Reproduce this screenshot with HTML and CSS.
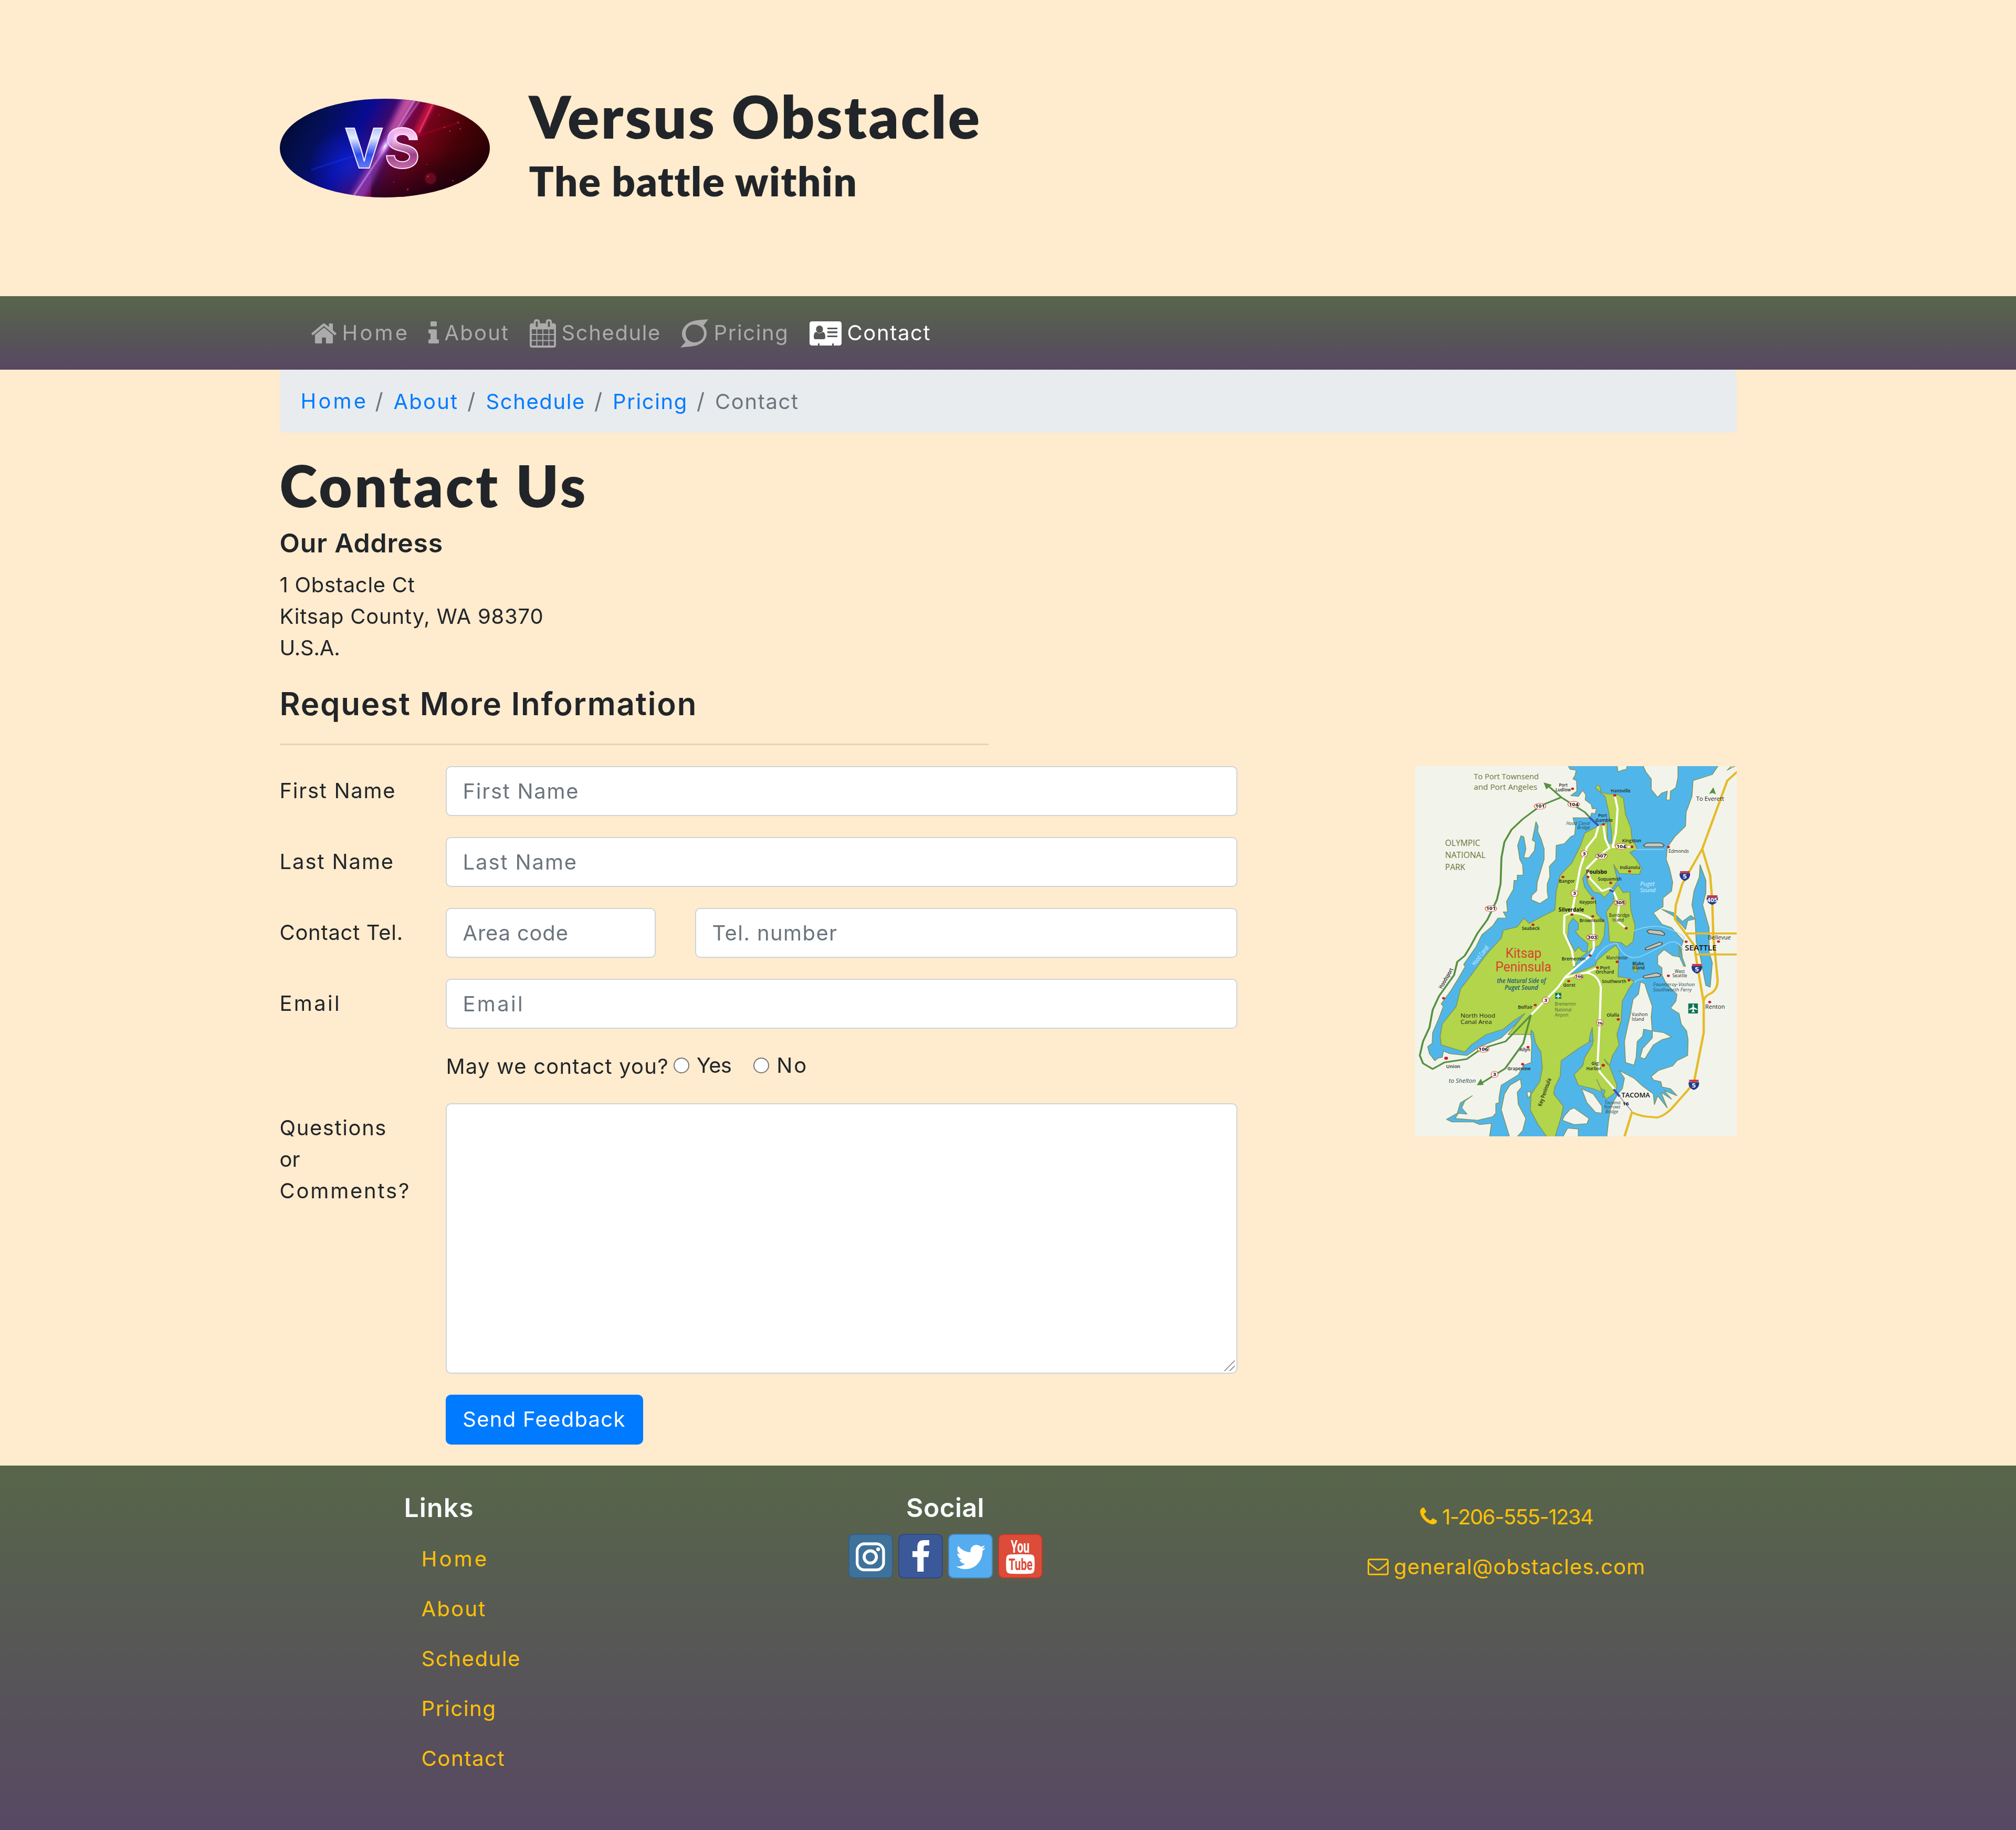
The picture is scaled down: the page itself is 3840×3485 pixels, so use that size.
FILE: index.html
```html
<!DOCTYPE html>
<html lang="en">
<head>
<meta charset="utf-8">
<title>Versus Obstacle - Contact</title>
<link rel="stylesheet" href="styles.css">
</head>
<body>
<header class="jumbotron">
  <div class="container masthead">
    <svg class="logo" viewBox="39 24 1200 564" preserveAspectRatio="none">
      <defs>
        <linearGradient id="lg" x1="0" y1=".2" x2="1" y2=".45">
          <stop offset="0" stop-color="#020a30"/><stop offset=".2" stop-color="#04125e"/><stop offset=".38" stop-color="#0a0ca0"/><stop offset=".48" stop-color="#3c0a78"/><stop offset=".58" stop-color="#7c0850"/><stop offset=".7" stop-color="#7a0418"/><stop offset=".85" stop-color="#4c0308"/><stop offset="1" stop-color="#300205"/>
        </linearGradient>
        <linearGradient id="lv" x1="0" y1="0" x2="0" y2="1"><stop offset="0" stop-color="#6a86f0"/><stop offset=".35" stop-color="#e4ecff"/><stop offset=".6" stop-color="#2b4cec"/><stop offset="1" stop-color="#a5a8f8"/></linearGradient>
        <linearGradient id="ls" x1="0" y1="0" x2="0" y2="1"><stop offset="0" stop-color="#e070d0"/><stop offset=".35" stop-color="#ffd0f4"/><stop offset=".6" stop-color="#a04088"/><stop offset="1" stop-color="#f090c8"/></linearGradient>
        <linearGradient id="dk" x1="0" y1="0" x2="0" y2="1"><stop offset=".5" stop-color="#08001c" stop-opacity="0"/><stop offset="1" stop-color="#08001c" stop-opacity=".6"/></linearGradient>
        <radialGradient id="gw"><stop offset="0" stop-color="#fff"/><stop offset=".3" stop-color="#e8b8ff" stop-opacity=".7"/><stop offset="1" stop-color="#8a40ff" stop-opacity="0"/></radialGradient>
        <radialGradient id="gb"><stop offset="0" stop-color="#1030ff" stop-opacity=".6"/><stop offset="1" stop-color="#1030ff" stop-opacity="0"/></radialGradient>
        <pattern id="dots" width="10" height="10" patternUnits="userSpaceOnUse"><circle cx="3" cy="3" r="2" fill="#000" opacity=".35"/><circle cx="8" cy="8" r="2" fill="#000" opacity=".35"/></pattern>
        <clipPath id="ell"><ellipse cx="639" cy="306" rx="600" ry="282"/></clipPath>
        <filter id="soft" x="-50%" y="-50%" width="200%" height="200%"><feGaussianBlur stdDeviation="12"/></filter>
        <filter id="thin" x="-50%" y="-50%" width="200%" height="200%"><feGaussianBlur stdDeviation="3"/></filter>
      </defs>
      <g clip-path="url(#ell)">
        <rect x="39" y="24" width="1200" height="564" fill="url(#lg)"/>
        <ellipse cx="440" cy="400" rx="230" ry="220" fill="url(#gb)"/>
        <rect x="560" y="24" width="679" height="564" fill="url(#dk)"/>
        <g filter="url(#soft)">
          <path d="M740 10L840 10 650 330 520 600 430 600 600 300Z" fill="#b050d0" opacity=".6"/>
          <path d="M900 10L950 10 830 240 780 260Z" fill="#f01850" opacity=".7"/>
          <path d="M760 10L820 10 700 210 660 220Z" fill="#ff70b0" opacity=".6"/>
        </g>
        <rect x="39" y="24" width="1200" height="564" fill="url(#dots)"/>
        <g filter="url(#thin)" stroke-linecap="round" fill="none">
          <path d="M810 30L640 310 460 580" stroke="#f0b0ff" stroke-width="6" opacity=".8"/>
          <path d="M835 40L700 230" stroke="#ff90d0" stroke-width="4"/>
          <path d="M915 50L835 215" stroke="#ff4070" stroke-width="8"/>
          <path d="M220 430L480 345" stroke="#1440ff" stroke-width="6" opacity=".6"/>
          <path d="M830 235L1060 160" stroke="#d01040" stroke-width="4" opacity=".7"/>
          <circle cx="900" cy="480" r="34" fill="#c01030" opacity=".35"/>
        </g>
        <g fill="#ff3050" opacity=".7"><circle cx="1058" cy="160" r="5"/><circle cx="980" cy="188" r="4"/><circle cx="1010" cy="208" r="4"/><circle cx="1070" cy="196" r="4"/><circle cx="770" cy="542" r="5"/><circle cx="690" cy="500" r="3"/><circle cx="880" cy="400" r="3"/><circle cx="1028" cy="492" r="4"/><circle cx="950" cy="116" r="3"/><circle cx="885" cy="468" r="5"/></g>
        <g font-family="Inter, sans-serif" font-weight="700" font-size="312" stroke="#f4eeff" stroke-width="6">
          <text x="408" y="419" textLength="224" lengthAdjust="spacingAndGlyphs" fill="url(#lv)">V</text>
          <text x="636" y="419" textLength="204" lengthAdjust="spacingAndGlyphs" fill="url(#ls)">S</text>
        </g>
        <ellipse cx="640" cy="295" rx="34" ry="100" transform="rotate(30 640 295)" fill="url(#gw)"/>
      </g>
    </svg>
    <div class="brand">
      <h1 class="brand-name">Versus Obstacle</h1>
      <h2 class="brand-tag">The battle within</h2>
    </div>
  </div>
</header>

<nav class="navbar">
  <div class="container nav-items">
    <a class="nav-link"><svg width="48" height="38" viewBox="89 253 1614 1283"><path fill="currentColor" d="M1472 992v480q0 26-19 45t-45 19h-384v-384h-256v384h-384q-26 0-45-19t-19-45v-480q0-1 .5-3t.5-3l575-474 575 474q1 2 1 6zm223-69l-62 74q-8 9-21 11h-3q-13 0-21-7l-692-577-692 577q-12 8-24 7-13-2-21-11l-62-74q-8-10-7-23.5t11-21.5l719-599q32-26 76-26t76 26l244 204v-195q0-14 9-23t23-9h192q14 0 23 9t9 23v408l219 182q10 8 11 21.5t-7 23.5z"/></svg><span class="w-home">Home</span></a>
    <a class="nav-link"><svg class="raised" width="20" height="42" viewBox="576 128 640 1408" preserveAspectRatio="none"><path fill="currentColor" d="M1216 1344v128q0 26-19 45t-45 19h-512q-26 0-45-19t-19-45v-128q0-26 19-45t45-19h64v-384h-64q-26 0-45-19t-19-45v-128q0-26 19-45t45-19h384q26 0 45 19t19 45v576h64q26 0 45 19t19 45zm-128-1152v192q0 26-19 45t-45 19h-256q-26 0-45-19t-19-45v-192q0-26 19-45t45-19h256q26 0 45 19t19 45z"/></svg><span class="w-about">About</span></a>
    <a class="nav-link"><svg width="50" height="54" viewBox="64 0 1664 1792"><path fill="currentColor" d="M192 1664h288v-288h-288v288zm352 0h320v-288h-320v288zm-352-352h288v-320h-288v320zm352 0h320v-320h-320v320zm-352-384h288v-288h-288v288zm736 736h320v-288h-320v288zm-384-736h320v-288h-320v288zm768 736h288v-288h-288v288zm-384-352h320v-320h-320v320zm-352-864v-288q0-13-9.5-22.5t-22.5-9.5h-64q-13 0-22.5 9.5t-9.5 22.5v288q0 13 9.5 22.5t22.5 9.5h64q13 0 22.5-9.5t9.5-22.5zm736 864h288v-320h-288v320zm-384-384h320v-288h-320v288zm384 0h288v-288h-288v288zm32-480v-288q0-13-9.5-22.5t-22.5-9.5h-64q-13 0-22.5 9.5t-9.5 22.5v288q0 13 9.5 22.5t22.5 9.5h64q13 0 22.5-9.5t9.5-22.5zm384-64v1280q0 52-38 90t-90 38h-1408q-52 0-90-38t-38-90v-1280q0-52 38-90t90-38h128v-96q0-66 47-113t113-47h64q66 0 113 47t47 113v96h384v-96q0-66 47-113t113-47h64q66 0 113 47t47 113v96h128q52 0 90 38t38 90z"/></svg><span class="w-schedule">Schedule</span></a>
    <a class="nav-link"><svg width="53" height="54" viewBox="0 0 53 54"><path fill="currentColor" fill-rule="evenodd" d="M53 0C38 1 27 2 20 5 10 9 3 18 3 28c0 6 3 11 7 15L0 54c14-2 25-2 33-5 10-4 17-12 17-22 0-6-2-11-6-15zM26 10c10 0 19 7 19 17S37 44 27 44 10 37 10 27 17 10 26 10z"/></svg><span class="w-pricing">Pricing</span></a>
    <a class="nav-link active"><svg width="61" height="46" viewBox="0 0 61 46"><path fill="currentColor" fill-rule="evenodd" d="M5 0H56Q61 0 61 5V41Q61 46 56 46H46V42H43V46H19V42H16V46H5Q0 46 0 41V5Q0 0 5 0ZM19 8C15 8 12.500 11 12.500 15S15 22 19 22 25.500 19 25.500 15 23 8 19 8ZM13 20C9 21 8 25 8 30Q8 34 11 34H27Q30 34 30 30C30 25 29 21 25 20Q19 25.500 13 20ZM34 12V15H53V12ZM34 19V22.500H53V19ZM34 27V30H53V27Z"/></svg><span class="w-contact">Contact</span></a>
  </div>
</nav>

<main class="container">
  <ol class="breadcrumb">
    <li><a class="w-home">Home</a></li><li><a class="w-about">About</a></li><li><a class="w-schedule">Schedule</a></li><li><a class="w-pricing">Pricing</a></li><li class="current w-contact">Contact</li>
  </ol>
  <h1 class="page-title">Contact Us</h1>
  <h5 class="h5">Our Address</h5>
  <address class="address"><span class="w-street">1 Obstacle Ct</span><br><span class="w-city">Kitsap County, WA 98370</span><br><span class="w-usa">U.S.A.</span></address>
  <h4 class="h4">Request More Information</h4>
  <hr class="rule">
  <div class="content">
    <form class="form">
      <label class="label w-first">First Name</label><input class="control w-first" placeholder="First Name">
      <label class="label w-last">Last Name</label><input class="control w-last" placeholder="Last Name">
      <label class="label w-tel">Contact Tel.</label>
      <div class="tel"><input class="control w-area" placeholder="Area code"><input class="control w-num" placeholder="Tel. number"></div>
      <label class="label w-email">Email</label><input class="control w-email" placeholder="Email">
      <div class="consent"><span class="ask">May we contact you?</span><i class="radio"></i><span class="yes">Yes</span><i class="radio"></i><span class="no">No</span></div>
      <label class="label"><span class="w-quest">Questions</span><br>or<br><span class="w-comm">Comments?</span></label>
      <div class="area"><textarea class="control box"></textarea><svg class="grip" width="20" height="20" viewBox="0 0 20 20"><path d="M0 20L20 0M10 20L20 10" stroke="#555" stroke-width="1.200"/></svg></div>
      <button class="send" type="button">Send Feedback</button>
    </form>
    <svg class="map" viewBox="37 27 1502 2115" preserveAspectRatio="none">
      <rect x="37" y="27" width="1502" height="2115" fill="#f2f4ec"/>
      <g fill="#50b6ea" stroke="#7d9560" stroke-width="4" stroke-linejoin="round">
        <path d="M750 20L762 45 790 50 785 80 775 100 792 110 793 170 765 195 800 200 820 165 835 190 832 220 860 245 865 270 885 270 878 300 862 295 855 322 775 322 780 345 787 370 783 420 765 430 735 470 697 480 695 560 665 600 667 660 655 700 655 745 660 780 620 812 580 790 583 765 605 740 608 690 640 560 640 500 625 440 610 400 612 370 602 345 597 380 590 420 585 450 600 460 595 510 570 550 545 550 555 500 545 430 532 425 517 480 527 560 540 590 543 650 515 650 515 680 500 680 497 730 465 800 470 860 450 860 465 895 425 895 400 940 350 990 322 1060 265 1160 272 1172 240 1240 205 1310 160 1385 170 1400 145 1480 120 1550 118 1610 97 1630 105 1670 130 1710 145 1695 165 1690 170 1655 200 1670 280 1680 340 1630 440 1580 500 1510 555 1435 575 1540 582 1600 580 1720 545 1735 520 1790 440 1850 430 1920 430 1950 415 1955 415 2010 400 2030 330 2050 225 2040 240 2010 280 2015 255 1980 270 1940 305 1910 250 1950 235 2010 185 2045 210 2060 310 2060 340 2075 395 2068 385 2150H932L940 2060 950 1980 965 1940 990 1890 1005 1870 1015 1810 990 1765 1060 1810 1100 1855 1150 1900 1155 1960 1170 1910 1215 1980 1185 1890 1235 1930 1200 1880 1260 1910 1230 1870 1190 1860 1185 1830 1150 1820 1140 1800 1175 1765 1240 1740 1260 1710 1310 1680 1312 1590 1305 1540 1280 1500 1270 1440 1230 1410 1255 1370 1260 1330 1235 1300 1210 1270 1190 1220 1190 1180 1170 1160 1170 1110 1200 1075 1240 1110 1285 1120 1280 1060 1290 1025 1235 950 1190 930 1150 865 1195 830 1195 780 1235 740 1240 690 1225 610 1210 560 1215 490 1250 430 1300 370 1303 290 1330 200 1335 110 1425 75 1455 20Z"/>
        <path d="M1368 590L1395 680 1395 750 1380 820 1410 950 1410 1090 1425 1150 1415 1290 1395 1280 1370 1120 1350 1030 1345 900 1330 820 1340 740 1365 660Z"/>
        <path d="M1190 845L1245 865 1285 915 1325 880 1345 900 1310 910 1300 960 1280 930 1240 880Z"/>
        <path d="M1270 1050L1285 1120 1300 1170 1292 1170 1270 1110Z"/>
      </g>
      <g fill="#f2f4ec" stroke="#7d9560" stroke-width="4" stroke-linejoin="round">
        <path d="M980 20L985 60 1005 50 1025 45 1028 20ZM1100 20L1115 60 1140 100 1140 160 1170 205 1190 180 1215 170 1210 220 1228 220 1230 170 1255 150 1265 90 1265 20ZM1520 20L1495 50 1540 20Z"/>
        <path d="M1090 1260L1110 1270 1120 1310 1145 1400 1140 1460 1145 1540 1105 1530 1100 1570 1075 1600 1070 1690 1060 1735 1020 1720 1015 1600 1025 1540 1040 1460 1055 1360 1080 1330ZM1145 1540L1200 1550 1235 1575 1190 1590 1150 1620 1110 1700 1088 1690 1100 1640 1145 1580Z"/>
        <path d="M780 1980L850 2040 840 2070 780 2075 725 2050 735 2025 760 1990ZM815 1870L870 1900 910 1970 910 2010 880 2005 840 1950ZM750 2095L800 2100 800 2150H725ZM530 1815L535 1860 515 1890 520 1960 555 2040 540 2110 510 2150H480L440 1990 455 1900 480 1850ZM560 1890L575 1885 578 1905 565 1925Z"/>
      </g>
      <g fill="#b2d54b" stroke="#7d9560" stroke-width="4" stroke-linejoin="round">
        <path d="M885 137L900 140 905 175 930 185 985 190 1010 210 1020 300 1045 380 1050 440 1075 500 1040 520 1070 560 1095 610 1085 645 990 640 965 590 975 640 985 680 950 740 920 780 905 755 870 745 845 700 835 640 820 670 830 720 855 760 880 790 885 870 925 920 920 1000 900 1050 860 1075 800 1130 765 1215 820 1195 850 1180 880 1165 885 1140 940 1080 975 1050 990 1080 985 1230 1040 1240 1060 1260 1040 1290 1005 1370 1000 1480 980 1560 990 1620 960 1680 945 1740 980 1850 975 1890 930 1930 910 1890 870 1870 800 1850 780 1790 820 1740 830 1690 865 1620 870 1590 800 1640 720 1710 715 1800 690 1860 685 1900 730 1970 720 2030 690 2150H655L610 2070 575 1990 580 1900 620 1830 632 1750 625 1660 600 1610 590 1550 580 1535 578 1560H472L550 1440 500 1480 450 1530 370 1560 300 1620 270 1660 160 1620 155 1570 165 1500 230 1400 250 1300 300 1220 360 1120 380 1090 440 1010 450 965 515 945 545 895 570 925 640 880 690 850 697 740 715 650 770 580 810 480 830 410 890 370 935 350 935 430 940 470 955 465 955 400 940 280 925 200 905 180 880 150Z"/>
        <path d="M985 705L1010 750 1040 745 1045 850 1065 940 1055 1030 1025 1060 1000 1035 945 1030 940 930 930 860 965 800 965 740ZM1055 1170L1075 1165 1072 1205 1060 1200Z"/>
      </g>
      <path fill="#50b6ea" stroke="#7d9560" stroke-width="4" d="M775 895L800 925 800 960 785 970 805 1000 845 1040 840 1090 820 1085 800 1060 785 1085 750 1010 755 930ZM865 1520L855 1560 850 1600 868 1595ZM885 1815L905 1870 925 1880 915 1920 905 1870ZM920 1700L945 1735 935 1730Z"/>
      <g fill="none" stroke="#fff" stroke-linecap="round" stroke-linejoin="round" stroke-width="10">
        <path d="M970 195L983 270 975 410 960 490 1050 487M917 360L925 440 945 495 905 530 840 610 855 670 910 740 945 725 965 745 990 820 980 910 1023 953M895 365L880 430 840 490 808 610 770 865 735 880 733 980 770 1080 780 1165M770 865Q830 870 860 900L870 920 872 1070 855 1110 740 1230 705 1290 580 1447M740 1235L840 1205 888 1180M830 1208Q890 1210 905 1290L900 1480 890 1720 900 1775 970 1875"/>
      </g>
      <g fill="none" stroke="#9fdcf8" stroke-width="4"><path d="M1065 503H1200M1055 970Q1150 920 1230 960T1290 1020M880 1130Q920 1040 980 1040 1020 1150 1100 1110L1200 1050Q1260 1000 1290 1080M1060 1265Q1080 1240 1110 1240"/></g>
      <g fill="none" stroke="#579040" stroke-width="9" stroke-linejoin="round">
        <path d="M660 140L720 205 830 290 855 322M720 205L640 245 600 275 540 330 488 390 455 460 441 550 437 700 420 790 385 880 375 905 330 980 297 1055 270 1110 235 1145 220 1220 150 1340 120 1420 105 1520 75 1600 60 1680 75 1725 120 1757 175 1720 280 1700 350 1640 460 1600 578 1450 543 1610 458 1755 345 1840"/>
      </g>
      <path fill="#579040" d="M638 120L676 134 650 160ZM326 1850L345 1812 358 1848ZM1410 185L1430 148 1442 188 1427 180Z"/>
      <path d="M852 320L895 368M945 733L965 745M965 1873L993 1915" stroke="#3c50b8" stroke-width="11" fill="none"/>
      <path d="M993 1915L1050 2000" stroke="#8a8a8a" stroke-width="4"/>
      <path fill="none" stroke="#e6bb28" stroke-width="11" stroke-linejoin="round" d="M1545 55L1495 110 1378 500 1320 625 1285 700 1255 820 1250 900 1340 1050 1360 1200 1385 1380 1385 1550 1340 1830 1310 1880 1230 1990Q1180 2045 1150 2032 1090 2030 1050 2005L1015 2145M1378 500L1415 650 1425 800 1430 1000 1450 1250Q1450 1310 1410 1330 1385 1345 1383 1380M1297 983H1545M1345 1103H1545"/>
      <g fill="#cc1f2c"><circle cx="773" cy="156" r="7"/><circle cx="970" cy="194" r="7"/><circle cx="917" cy="360" r="7"/><circle cx="1050" cy="488" r="7"/><circle cx="1220" cy="489" r="7"/><circle cx="1039" cy="628" r="7"/><circle cx="845" cy="660" r="7"/><circle cx="728" cy="660" r="7"/><circle cx="951" cy="694" r="7"/><circle cx="866" cy="783" r="7"/><circle cx="770" cy="875" r="7"/><circle cx="867" cy="885" r="7"/><circle cx="588" cy="933" r="7"/><circle cx="1023" cy="953" r="7"/><circle cx="1303" cy="1030" r="7"/><circle cx="1454" cy="1029" r="7"/><circle cx="855" cy="1109" r="7"/><circle cx="981" cy="1145" r="7"/><circle cx="889" cy="1178" r="7"/><circle cx="755" cy="1255" r="7"/><circle cx="1036" cy="1250" r="7"/><circle cx="1220" cy="1225" r="7"/><circle cx="171" cy="1353" r="7"/><circle cx="599" cy="1392" r="7"/><circle cx="986" cy="1474" r="7"/><circle cx="1413" cy="1375" r="7"/><circle cx="565" cy="1632" r="7"/><circle cx="183" cy="1696" r="9"/><circle cx="540" cy="1730" r="7"/><circle cx="916" cy="1736" r="8"/></g>
      <g fill="#fff" stroke="#e2533c" stroke-width="3"><ellipse cx="621" cy="256" rx="27" ry="17"/><ellipse cx="778" cy="245" rx="27" ry="17"/><ellipse cx="1000" cy="485" rx="27" ry="17"/><ellipse cx="827" cy="528" rx="16" ry="18"/><ellipse cx="908" cy="541" rx="27" ry="17"/><ellipse cx="782" cy="754" rx="16" ry="18"/><ellipse cx="995" cy="808" rx="27" ry="17"/><ellipse cx="392" cy="841" rx="27" ry="17"/><ellipse cx="865" cy="1005" rx="27" ry="17"/><ellipse cx="803" cy="1229" rx="20" ry="14"/><ellipse cx="648" cy="1365" rx="16" ry="18"/><ellipse cx="901" cy="1493" rx="16" ry="18"/><ellipse cx="356" cy="1644" rx="27" ry="17"/><ellipse cx="409" cy="1788" rx="16" ry="18"/></g>
      <g fill="#24398c"><path d="M1273 638H1321Q1325 670 1297 683 1269 670 1273 638Z"/><path d="M1399 778H1451Q1455 808 1425 820 1395 808 1399 778Z"/><path d="M1329 1168H1377Q1381 1200 1353 1213 1325 1200 1329 1168Z"/><path d="M1315 1832H1363Q1367 1864 1339 1877 1311 1864 1315 1832Z"/></g>
      <path fill="#cc3340" d="M1275 627H1319V638H1275ZM1401 765H1449V778H1401ZM1331 1157H1375V1168H1331ZM1317 1819H1361V1831H1317Z"/>
      <g fill="#0d7350"><path d="M692 1322H720V1356H692ZM1313 1383H1358V1440H1313Z"/></g>
      <path fill="#fff" d="M704 1326H708V1334L718 1343V1346L708 1343V1349L711 1353H701L704 1349V1343L694 1346V1343L704 1334ZM1333 1390Q1336 1385 1339 1390V1404L1355 1415V1420L1339 1415V1426L1345 1433H1327L1333 1426V1415L1317 1420V1415L1333 1404Z"/>
      <g fill="#c9c5b4" stroke="#4a4940" stroke-width="4"><path d="M1104 478L1110 488H1196L1200 478 1185 466H1120Z"/><path d="M1120 970L1130 982 1200 994 1203 983 1185 968 1130 962Z"/><path d="M1112 1075L1116 1064 1180 1032 1192 1038 1188 1048 1120 1077Z"/><path d="M1102 1236L1104 1226 1165 1208 1185 1218 1180 1228 1115 1238Z"/></g>
      <g font-family="Open Sans, sans-serif">
        <g fill="#6f7336"><text x="312" y="102" font-size="43" textLength="303" lengthAdjust="spacingAndGlyphs">To Port Townsend</text><text x="312" y="161" font-size="43" textLength="296" lengthAdjust="spacingAndGlyphs">and Port Angeles</text><text x="178" y="482" font-size="50" textLength="164" lengthAdjust="spacingAndGlyphs">OLYMPIC</text><text x="178" y="551" font-size="50" textLength="189" lengthAdjust="spacingAndGlyphs">NATIONAL</text><text x="178" y="620" font-size="50" textLength="94" lengthAdjust="spacingAndGlyphs">PARK</text></g>
        <g fill="#da4330" font-family="Roboto, sans-serif"><text x="460" y="1123" font-size="78" textLength="168" lengthAdjust="spacingAndGlyphs">Kitsap</text><text x="413" y="1199" font-size="78" textLength="261" lengthAdjust="spacingAndGlyphs">Peninsula</text></g>
        <g fill="#17587c" font-style="italic" font-weight="600" font-size="38"><text x="420" y="1265" textLength="228" lengthAdjust="spacingAndGlyphs">the Natural Side of</text><text x="456" y="1305" textLength="156" lengthAdjust="spacingAndGlyphs">Puget Sound</text></g>
        <g fill="#d8f2ff" font-style="italic"><text x="1088" y="712" font-size="30" textLength="68" lengthAdjust="spacingAndGlyphs">Puget</text><text x="1088" y="748" font-size="30" textLength="72" lengthAdjust="spacingAndGlyphs">Sound</text><text font-size="32" transform="translate(318 1168) rotate(-58)" textLength="125" lengthAdjust="spacingAndGlyphs">Hood Canal</text></g>
        <g fill="#1d2a1d" font-size="27" font-weight="600">
          <text x="709" y="144" textLength="41" lengthAdjust="spacingAndGlyphs">Port</text><text x="693" y="170" textLength="72" lengthAdjust="spacingAndGlyphs">Ludlow</text><text x="951" y="178" textLength="92" lengthAdjust="spacingAndGlyphs">Hansville</text><text x="892" y="318" textLength="42" lengthAdjust="spacingAndGlyphs">Port</text><text x="880" y="345" textLength="80" lengthAdjust="spacingAndGlyphs">Gamble</text><text x="1004" y="462" textLength="90" lengthAdjust="spacingAndGlyphs">Kingston</text><text x="993" y="614" textLength="95" lengthAdjust="spacingAndGlyphs">Indianola</text><text x="891" y="680" textLength="111" lengthAdjust="spacingAndGlyphs">Suquamish</text><text x="709" y="692" textLength="74" lengthAdjust="spacingAndGlyphs">Bangor</text><text x="805" y="812" textLength="79" lengthAdjust="spacingAndGlyphs">Keyport</text><text x="805" y="917" textLength="116" lengthAdjust="spacingAndGlyphs">Brownsville</text><text x="536" y="962" textLength="84" lengthAdjust="spacingAndGlyphs">Seabeck</text><text x="722" y="1137" textLength="112" lengthAdjust="spacingAndGlyphs">Bremerton</text><text x="901" y="1188" textLength="47" lengthAdjust="spacingAndGlyphs">Port</text><text x="881" y="1211" textLength="85" lengthAdjust="spacingAndGlyphs">Orchard</text><text x="729" y="1287" textLength="57" lengthAdjust="spacingAndGlyphs">Gorst</text><text x="910" y="1266" textLength="113" lengthAdjust="spacingAndGlyphs">Southworth</text><text x="518" y="1412" textLength="69" lengthAdjust="spacingAndGlyphs">Belfair</text><text x="932" y="1459" textLength="59" lengthAdjust="spacingAndGlyphs">Olalla</text><text x="183" y="1751" textLength="66" lengthAdjust="spacingAndGlyphs">Union</text><text x="525" y="1657" textLength="50" lengthAdjust="spacingAndGlyphs">Allyn</text><text x="469" y="1765" textLength="108" lengthAdjust="spacingAndGlyphs">Grapeview</text><text x="861" y="1735" textLength="34" lengthAdjust="spacingAndGlyphs">Gig</text><text x="837" y="1764" textLength="70" lengthAdjust="spacingAndGlyphs">Harbor</text><text x="1052" y="1163" textLength="55" lengthAdjust="spacingAndGlyphs">Blake</text><text x="1052" y="1188" textLength="58" lengthAdjust="spacingAndGlyphs">Island</text>
        </g>
        <g fill="#111" font-weight="700"><text x="836" y="643" font-size="31" textLength="98" lengthAdjust="spacingAndGlyphs">Poulsbo</text><text x="708" y="857" font-size="31" textLength="118" lengthAdjust="spacingAndGlyphs">Silverdale</text></g>
        <g fill="#222" font-size="28"><text x="1350" y="226" font-size="33" textLength="130" lengthAdjust="spacingAndGlyphs">To Everett</text><text x="1221" y="523" textLength="95" lengthAdjust="spacingAndGlyphs">Edmonds</text><text x="1405" y="1018" font-size="34" textLength="107" lengthAdjust="spacingAndGlyphs">Bellevue</text><text x="1250" y="1210" textLength="47" lengthAdjust="spacingAndGlyphs">West</text><text x="1239" y="1234" textLength="68" lengthAdjust="spacingAndGlyphs">Seattle</text><text x="1392" y="1412" font-size="33" textLength="92" lengthAdjust="spacingAndGlyphs">Renton</text><text x="1049" y="1456" textLength="75" lengthAdjust="spacingAndGlyphs">Vashon</text><text x="1049" y="1482" textLength="58" lengthAdjust="spacingAndGlyphs">Island</text><text x="943" y="888" textLength="96" lengthAdjust="spacingAndGlyphs" font-size="25">Bainbridge</text><text x="959" y="914" textLength="54" lengthAdjust="spacingAndGlyphs" font-size="25">Island</text><text x="930" y="1130" textLength="102" lengthAdjust="spacingAndGlyphs" font-size="26">Manchester</text><text x="250" y="1463" font-size="33" textLength="162" lengthAdjust="spacingAndGlyphs">North Hood</text><text x="250" y="1499" font-size="33" textLength="146" lengthAdjust="spacingAndGlyphs">Canal Area</text></g>
        <g fill="#111" font-weight="600"><text x="1297" y="1080" font-size="42" textLength="148" lengthAdjust="spacingAndGlyphs">SEATTLE</text><text x="1001" y="1920" font-size="39" textLength="133" lengthAdjust="spacingAndGlyphs">TACOMA</text></g>
        <g fill="#4d6440" font-size="27"><text x="690" y="1395" textLength="98" lengthAdjust="spacingAndGlyphs">Bremerton</text><text x="690" y="1427" textLength="78" lengthAdjust="spacingAndGlyphs">National</text><text x="690" y="1459" textLength="64" lengthAdjust="spacingAndGlyphs">Airport</text></g>
        <g fill="#2c4a58" font-style="italic" font-size="26"><text x="743" y="363" textLength="112" lengthAdjust="spacingAndGlyphs">Hood Canal</text><text x="794" y="386" textLength="61" lengthAdjust="spacingAndGlyphs">Bridge</text><text x="1149" y="1285" textLength="195" lengthAdjust="spacingAndGlyphs">Fauntleroy-Vashon</text><text x="1149" y="1314" textLength="180" lengthAdjust="spacingAndGlyphs">Southworth Ferry</text><text x="922" y="1958" textLength="75" lengthAdjust="spacingAndGlyphs">Tacoma</text><text x="919" y="1984" textLength="77" lengthAdjust="spacingAndGlyphs">Narrows</text><text x="926" y="2010" textLength="60" lengthAdjust="spacingAndGlyphs">Bridge</text><text x="195" y="1835" font-size="32" textLength="126" lengthAdjust="spacingAndGlyphs">to Shelton</text></g>
        <g fill="#222" font-weight="600"><text font-size="27" transform="translate(164 1300) rotate(-65)" textLength="125" lengthAdjust="spacingAndGlyphs">Hoodsport</text><text font-size="27" transform="translate(628 1972) rotate(-74)" textLength="165" lengthAdjust="spacingAndGlyphs">Key Peninsula</text></g>
        <g fill="#111" font-size="26" font-weight="700" text-anchor="middle"><text x="621" y="265">101</text><text x="778" y="254">104</text><text x="1000" y="494">104</text><text x="827" y="537">3</text><text x="908" y="550">307</text><text x="782" y="763">3</text><text x="995" y="817">305</text><text x="392" y="850">101</text><text x="865" y="1014">303</text><text x="803" y="1237" font-size="21">166</text><text x="648" y="1374">3</text><text x="901" y="1502" font-size="23">16</text><text x="356" y="1653">106</text><text x="409" y="1797">3</text><text x="1021" y="1965">16</text></g>
        <g fill="#fff" font-size="33" font-weight="700" text-anchor="middle"><text x="1297" y="669">5</text><text x="1425" y="805" font-size="29">405</text><text x="1353" y="1199">5</text><text x="1339" y="1862">5</text></g>
      </g>
    </svg>
  </div>
</main>

<footer class="footer">
  <div class="container foot-grid">
    <div class="links">
      <h5 class="foot-title w-links">Links</h5>
      <ul class="link-list"><li class="w-home">Home</li><li class="w-about">About</li><li class="w-schedule">Schedule</li><li class="w-pricing">Pricing</li><li class="w-contact">Contact</li></ul>
    </div>
    <div class="social">
      <h5 class="foot-title w-social">Social</h5>
      <div class="badges">
        <svg width="85" height="85" viewBox="0 0 255 255"><rect x="3" y="3" width="249" height="249" rx="28" fill="#3f729b" stroke="#335f84" stroke-width="6"/><g fill="none" stroke="#fff"><rect x="50" y="57" width="151" height="149" rx="42" stroke-width="16"/><circle cx="125" cy="132" r="35" stroke-width="17"/></g><circle cx="170" cy="88" r="11" fill="#fff"/></svg>
        <svg width="85" height="85" viewBox="0 0 255 255"><rect x="3" y="3" width="249" height="249" rx="28" fill="#3b5998" stroke="#30487f" stroke-width="6"/><path fill="#fff" d="M109 216V133H81V99H109V76Q109 36 146 36H177V66H158Q145 66 145 78V99H177L172 133H145V216Z"/></svg>
        <svg width="85" height="85" viewBox="0 0 255 255"><rect x="3" y="3" width="249" height="249" rx="28" fill="#55acee" stroke="#4389bf" stroke-width="6"/><path fill="#fff" transform="translate(34 35) scale(.1066 .1085)" d="M1684 408q-67 98-162 167 1 14 1 42 0 130-38 259.500t-115.500 248.500-184.500 210.500-258 146-323 54.500q-271 0-496-145 35 4 78 4 225 0 401-138-105-2-188-64.500t-114-159.500q33 5 61 5 43 0 85-11-112-23-185.500-111.500t-73.500-205.500v-4q68 38 146 41-66-44-105-115t-39-154q0-88 44-163 121 149 294.500 238.500t371.500 99.500q-8-38-8-74 0-134 94.500-228.500t228.500-94.500q140 0 236 102 109-21 205-78-37 115-142 178 93-10 186-50z"/></svg>
        <svg class="tube" width="85" height="85" viewBox="0 0 255 255"><rect x="3" y="3" width="249" height="249" rx="28" fill="#dd4b39" stroke="#b83b2d" stroke-width="6"/><path fill="#fff" d="M68 118Q128 114 188 118 206 120 208 138 211 172 208 206 206 224 188 227 128 231 68 227 49 224 47 206 44 172 47 138 49 120 68 118Z"/><g font-family="Roboto, Liberation Sans Narrow, sans-serif" font-weight="700"><text x="73" y="107" font-size="99" textLength="107" lengthAdjust="spacingAndGlyphs" fill="#fff">You</text><text x="61" y="206" font-size="96" textLength="136" lengthAdjust="spacingAndGlyphs" fill="#dd4b39">Tube</text></g></svg>
      </div>
    </div>
    <div class="reach">
      <a><svg class="phone" width="32" height="32" viewBox="192 128 1408 1408"><path fill="currentColor" d="M1600 1240q0 27-10 70.500t-21 68.500q-21 50-122 106-94 51-186 51-27 0-53-3.500t-57.500-12.500-47-14.500-55.500-20.500-49-18q-98-35-175-83-127-79-264-216t-216-264q-48-77-83-175-3-9-18-49t-20.500-55.500-14.500-47-12.500-57.500-3.500-53q0-92 51-186 56-101 106-122 25-11 68.500-21t70.500-10q14 0 21 3 18 6 53 76 11 19 30 54t35 63.500 31 53.500q3 4 17.500 25t21.500 35.500 7 28.500q0 20-28.500 50t-62 55-62 53-28.500 46q0 9 5 22.500t8.500 20.500 14 24 11.500 19q76 137 174 235t235 174q2 1 19 11.500t24 14 20.500 8.500 22.500 5q18 0 46-28.500t53-62 55-62 50-28.500q14 0 28.500 7t35.500 21.500 25 17.500q25 15 53.500 31t63.500 35 54 30q70 35 76 53 3 7 3 21z"/></svg><span class="w-phone">1-206-555-1234</span></a>
      <a><svg width="40" height="32" viewBox="0 256 1792 1408"><path fill="currentColor" d="M1664 1504v-768q-32 36-69 66-268 206-426 338-51 43-83 67t-86.500 48.500-102.500 24.500h-2q-48 0-102.500-24.500t-86.500-48.500-83-67q-158-132-426-338-37-30-69-66v768q0 13 9.500 22.500t22.500 9.500h1472q13 0 22.500-9.500t9.500-22.500zm0-1051v-24.500l-.5-13-3-12.500-5.500-9-9-7.500-14-2.500h-1472q-13 0-22.500 9.500t-9.500 22.500q0 168 147 284 193 152 401 317 6 5 35 29.500t46 37.500 44.500 31.500 50.500 27.500 43 9h2q20 0 43-9t50.500-27.500 44.500-31.500 46-37.500 35-29.500q208-165 401-317 54-43 100.500-115.500t46.500-131.500zm128-37v1088q0 66-47 113t-113 47h-1472q-66 0-113-47t-47-113v-1088q0-66 47-113t113-47h1472q66 0 113 47t47 113z"/></svg><span class="w-mail">general@obstacles.com</span></a>
    </div>
  </div>
</footer>
</body>
</html>
```
FILE: styles.css
```css
* { box-sizing: border-box; }
body { margin: 0; background: #ffebcd; color: #212529; font: 400 40px/60px Inter, sans-serif; }
h1, h2, h4, h5, ol, ul { margin: 0; padding: 0; list-style: none; }
.container { width: 2775px; margin: 0 auto; }

/* Masthead */
.jumbotron { height: 564px; }
.masthead { display: flex; padding-top: 160px; gap: 75px; }
.logo { width: 400px; height: 188px; margin-top: 28px; flex: none; }
.brand { font-family: Lato, sans-serif; }
.brand-name { font-size: 112px; line-height: 120px; font-weight: 800; letter-spacing: 3.3px; padding-top: 1px; }
.brand-tag { font-size: 78px; line-height: 96px; font-weight: 800; letter-spacing: 1.6px; padding-top: 15px; }

/* Navigation */
.navbar { height: 140px; background: linear-gradient(#576649, #574863); }
.nav-items { display: grid; grid-template-columns: 223px 193px 287px 246px auto; align-items: center; height: 140px; padding-left: 60px; }
.nav-link { display: flex; align-items: center; gap: 11px; color: #ababab; }
.nav-link svg { flex: none; position: relative; top: 1px; }
.nav-link .raised { top: -1px; }
.nav-link.active { color: #fff; }

/* Breadcrumb and headings */
.breadcrumb { display: flex; height: 120px; padding: 30px 40px; background: #e9ecef; border-radius: 10px; }
.breadcrumb a { color: #007bff; }
.breadcrumb .w-home { margin-right: -4px; }
.breadcrumb li + li::before { content: "/"; color: #6c757d; letter-spacing: 0; font-size: 42px; padding: 0 20px 0 17px; }
.breadcrumb .current { color: #6c757d; }
.page-title { margin-top: 40px; font: 800 109px/120px Lato, sans-serif; letter-spacing: 4.6px; }
.h5 { margin-top: 20px; font-size: 50px; line-height: 60px; font-weight: 600; letter-spacing: .8px; }
.address { margin-top: 20px; font-style: normal; }
.h4 { margin-top: 40px; font-size: 60px; line-height: 72px; font-weight: 600; letter-spacing: 1.8px; }
.rule { width: 1350px; height: 3px; margin: 40px 0; border: 0; background: #e6d4b9; }

/* Form */
.content { display: flex; justify-content: space-between; align-items: flex-start; }
.form { display: grid; grid-template-columns: 241px 1508px; column-gap: 75px; row-gap: 40px; padding-bottom: 40px; }
.label { padding-top: 17px; }
.control { display: block; width: 100%; height: 95px; padding: 15px 31px; border: 2.5px solid #ced4da; border-radius: 10px; background: #fff; color: #495057; font: inherit; outline: 0; }
.control::placeholder { color: #6c757d; opacity: 1; }
.tel { display: grid; grid-template-columns: 400px 1033px; gap: 75px; }
.consent { grid-column: 2; display: flex; align-items: center; height: 62px; padding-bottom: 3px; }
.ask { letter-spacing: 1.2px; padding: 4px 0 0 1px; }
.radio { width: 30px; height: 30px; border: 2.5px solid #767676; border-radius: 50%; background: #fff; margin: 0 14px 0 9px; }
.yes { letter-spacing: -.7px; margin-right: 33px; }
.no { letter-spacing: 3px; }
.area { position: relative; height: 515px; }
.box { height: 515px; resize: none; }
.grip { position: absolute; right: 5px; bottom: 5px; }
.send { grid-column: 2; justify-self: start; width: 376px; height: 95px; padding: 0 0 2px; border: 0; border-radius: 10px; background: #007bff; color: #fff; font: inherit; letter-spacing: 1.3px; }
.map { width: 613px; height: 705px; flex: none; display: block; }

/* Footer */
.footer { height: 694px; background: linear-gradient(#576649, #574863); }
.foot-grid { display: grid; grid-template-columns: 437px 1188px 950px; padding-left: 237px; padding-top: 50px; }
.foot-title { color: #f8f9fa; font-size: 50px; line-height: 60px; font-weight: 600; }
.link-list { padding: 20px 0 0 33px; color: #ffc107; line-height: 95px; }
.social { text-align: center; }
.badges { display: flex; justify-content: center; gap: 10px; margin-top: 20px; }
.tube { overflow: visible; }
.reach { color: #ffc107; line-height: 95px; }
.reach a { display: flex; justify-content: center; align-items: center; gap: 10px; }
.reach .phone { position: relative; top: -2px; }

/* Tracking per phrase */
.w-home { letter-spacing: 4.2px; }
.w-about { letter-spacing: 2.2px; }
.w-schedule, .w-pricing, .w-contact { letter-spacing: 1.6px; }
.w-street { letter-spacing: .7px; }
.w-city { letter-spacing: .8px; }
.w-usa { letter-spacing: -.2px; }
.w-first { letter-spacing: 1.7px; }
.w-last { letter-spacing: 1.9px; }
.w-tel { letter-spacing: .7px; }
.w-email { letter-spacing: 3.3px; }
.w-area { letter-spacing: .8px; }
.w-num { letter-spacing: 1.4px; }
.w-quest { letter-spacing: 1.6px; }
.w-comm { letter-spacing: 2.8px; }
.w-links { letter-spacing: 1.1px; }
.w-social { letter-spacing: .3px; }
.w-phone { letter-spacing: -1.5px; }
.w-mail { letter-spacing: 1.1px; }
```
